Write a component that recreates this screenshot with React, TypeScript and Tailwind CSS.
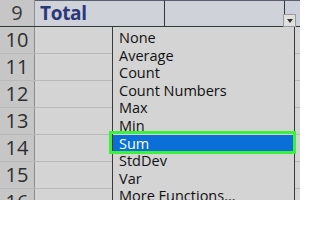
import React from "react";

const rows = [10, 11, 12, 13, 14, 15, 16];
const items = ["None", "Average", "Count", "Count Numbers", "Max", "Min", "Sum", "StdDev", "Var", "More Functions..."];

export default function App() {
  return (
    <div className="relative w-[300px] h-[200px] overflow-hidden bg-[#d4d4d4] font-['Open_Sans',sans-serif]">
      {/* total row */}
      <div className="flex h-[27px] border-b border-[#2e3a34]">
        <div className="w-[35px] shrink-0 bg-[#c6c6c6] border-r border-[#8c8c8c] flex items-center justify-center text-[20px] text-[#3a3a3a]">
          9
        </div>
        <div className="w-[130px] shrink-0 bg-[#d0d2da] border-t border-[#5a6070] border-r border-r-[#2e3a34] flex items-center pl-[5px] text-[19px] font-bold tracking-[-0.3px] text-[#2b3878]">
          Total
        </div>
        <div className="w-[120px] shrink-0 bg-[#d0d2da] border-t border-[#5a6070] border-r border-r-[#2e3a34]" />
        <div className="flex-1 bg-[#ccd0dc] border-t border-[#5a6070]" />
      </div>

      {rows.map((n) => (
        <div key={n} className="flex h-[27px] border-b border-[#b9b9b9]">
          <div className="w-[35px] shrink-0 bg-[#c6c6c6] border-r border-[#8c8c8c] flex items-center justify-center text-[20px] text-[#2e2e2e]">
            {n}
          </div>
          <div className="flex-1" />
        </div>
      ))}

      {/* dropdown button */}
      <div className="absolute left-[283px] top-[14px] w-[13px] h-[13px] bg-[#e0e0e0] border border-[#9a9a9a] flex items-center justify-center">
        <svg width="6" height="4" viewBox="0 0 6 4">
          <path d="M0 0h6L3 4z" fill="#333" />
        </svg>
      </div>

      {/* function menu */}
      <div className="absolute left-[112px] top-[27px] w-[183px] h-[180px] bg-[#d4d4d4] border-l border-r border-[#3a3a3a] pt-[2px]">
        {items.map((it) => (
          <div
            key={it}
            className={
              it === "Sum"
                ? "relative h-[17.6px] leading-[17.6px] pl-[6px] text-[14.5px] text-white bg-[#0a6fd6]"
                : "h-[17.6px] leading-[17.6px] pl-[6px] text-[14.5px] text-[#111]"
            }
          >
            {it}
            {it === "Sum" && (
              <span className="absolute -left-[4px] -right-[2px] -top-[4px] -bottom-[2px] border-[3px] border-[#3cf03c]" />
            )}
          </div>
        ))}
      </div>
    </div>
  );
}
